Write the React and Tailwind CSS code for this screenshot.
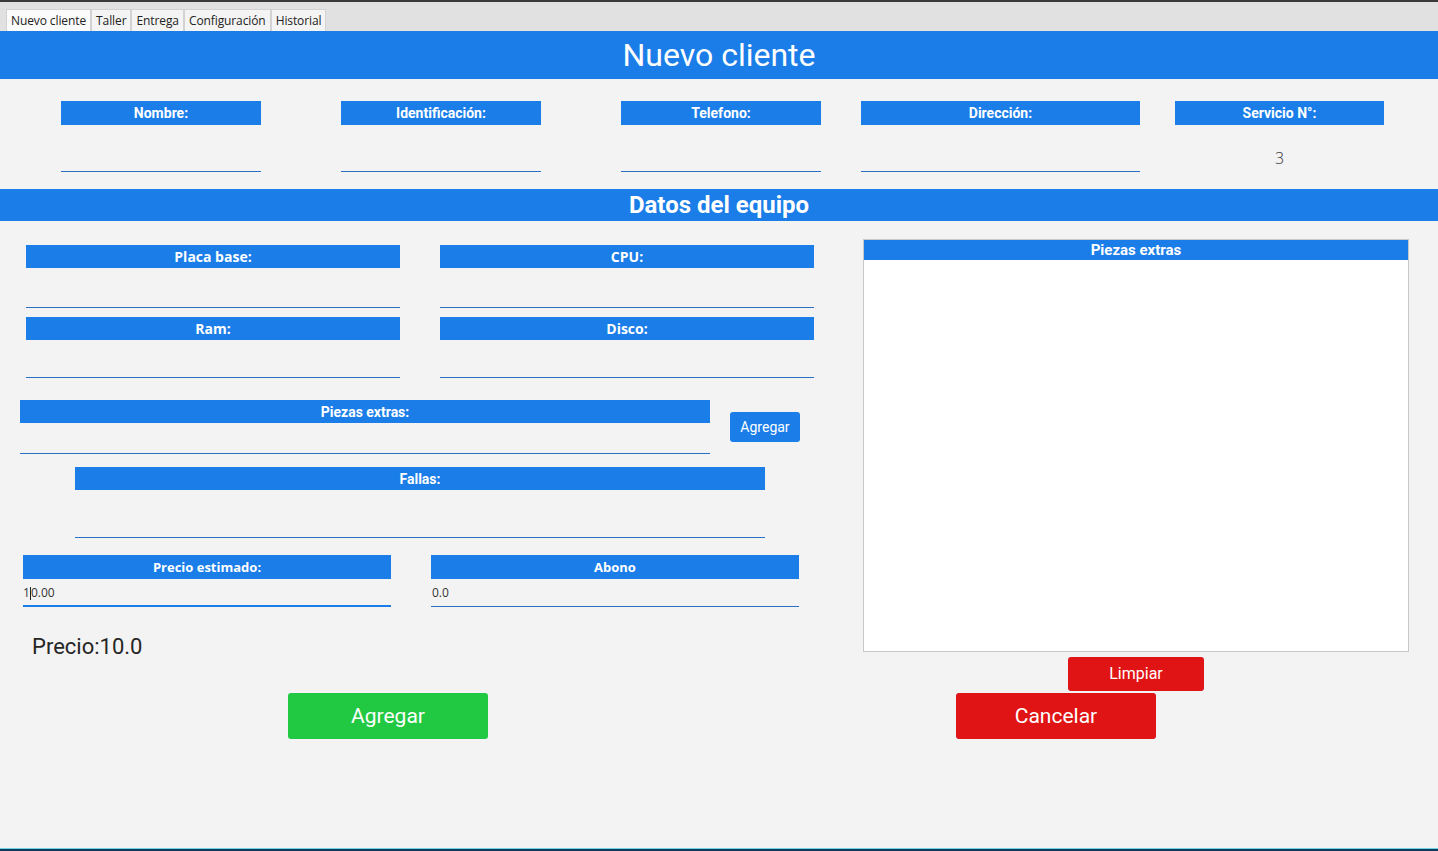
import React from "react";

const BLUE = "bg-[#1a7de8]";

function TopField({ label, ml, w, value }) {
  return (
    <div className={`flex flex-col shrink-0 ${ml} ${w}`}>
      <div className={`h-[24px] ${BLUE} text-white text-[14px] font-bold flex items-center justify-center`}>{label}</div>
      {value ? (
        <div className="h-[47px] flex items-center justify-center pt-[18px] text-[16px] font-light text-[#333] font-['Open_Sans',sans-serif]">{value}</div>
      ) : (
        <div className="h-[47px] border-b border-[#2a6fc0]"></div>
      )}
    </div>
  );
}

function Field({ label, ml, w, boxH, labelCls = "", lh = "h-[23px]" }) {
  return (
    <div className={`flex flex-col shrink-0 ${ml} ${w}`}>
      <div className={`${lh} ${BLUE} text-white text-[14px] font-bold flex items-center justify-center ${labelCls}`}>{label}</div>
      <div className={`${boxH} border-b border-[#2a6fc0]`}></div>
    </div>
  );
}

export default function App() {
  const tabs = ["Nuevo cliente", "Taller", "Entrega", "Configuración", "Historial"];
  return (
    <div className="w-[1438px] h-[851px] bg-[#f3f3f3] flex flex-col overflow-hidden font-['Roboto',sans-serif]">
      <div className="h-[2px] bg-[#3a3a3a]"></div>
      <div className="h-[29px] bg-[#e1e1e1] flex items-end pl-[6px]">
        {tabs.map((t, i) => (
          <div
            key={t}
            className={`h-[22px] px-[4px] flex items-center text-[12px] tracking-[-0.1px] text-[#222] font-['Open_Sans',sans-serif] border border-b-0 border-[#d2d2d2] ${i === 0 ? "bg-[#fbfbfb]" : "bg-[#f4f4f4]"}`}
          >
            {t}
          </div>
        ))}
      </div>
      <div className={`h-[48px] ${BLUE} flex items-center justify-center text-white text-[32px]`}>Nuevo cliente</div>

      <div className="flex pt-[22px]">
        <TopField label="Nombre:" ml="ml-[61px]" w="w-[200px]" />
        <TopField label="Identificación:" ml="ml-[80px]" w="w-[200px]" />
        <TopField label="Telefono:" ml="ml-[80px]" w="w-[200px]" />
        <TopField label="Dirección:" ml="ml-[40px]" w="w-[279px]" />
        <TopField label="Servicio N°:" ml="ml-[35px]" w="w-[209px]" value="3" />
      </div>

      <div className={`mt-[17px] h-[32px] ${BLUE} flex items-center justify-center text-white text-[24px] font-bold`}>Datos del equipo</div>

      <div className="flex items-start">
        <div className="w-[840px] shrink-0 flex flex-col">
          <div className="flex pt-[24px]">
            <Field label="Placa base:" ml="ml-[26px]" w="w-[374px]" boxH="h-[40px]" labelCls="font-['Open_Sans',sans-serif] text-[13px]" />
            <Field label="CPU:" ml="ml-[40px]" w="w-[374px]" boxH="h-[40px]" labelCls="font-['Open_Sans',sans-serif] text-[13px]" />
          </div>
          <div className="flex mt-[9px]">
            <Field label="Ram:" ml="ml-[26px]" w="w-[374px]" boxH="h-[38px]" labelCls="font-['Open_Sans',sans-serif] text-[13px]" />
            <Field label="Disco:" ml="ml-[40px]" w="w-[374px]" boxH="h-[38px]" labelCls="font-['Open_Sans',sans-serif] text-[13px]" />
          </div>
          <div className="flex items-start mt-[22px]">
            <Field label="Piezas extras:" ml="ml-[20px]" w="w-[690px]" boxH="h-[31px]" labelCls="pt-[2px]" />
            <button className={`ml-[20px] mt-[12px] w-[70px] h-[30px] ${BLUE} rounded-[3px] text-white text-[14px]`}>Agregar</button>
          </div>
          <div className="flex mt-[13px]">
            <Field label="Fallas:" ml="ml-[75px]" w="w-[690px]" boxH="h-[48px]" labelCls="pt-[2px]" />
          </div>
          <div className="flex mt-[17px]">
            <div className="flex flex-col ml-[23px] w-[368px]">
              <div className={`h-[24px] ${BLUE} text-white text-[13px] font-bold font-['Open_Sans',sans-serif] flex items-center justify-center pt-[1px]`}>Precio estimado:</div>
              <div className="h-[28px] border-b-2 border-[#1a7de8] flex items-center pt-[2px] text-[12px] text-[#333] font-['Open_Sans',sans-serif]">
                <span>1</span>
                <span className="w-px h-[13px] bg-[#222]"></span>
                <span>0.00</span>
              </div>
            </div>
            <div className="flex flex-col ml-[40px] w-[368px]">
              <div className={`h-[24px] ${BLUE} text-white text-[13px] font-bold font-['Open_Sans',sans-serif] flex items-center justify-center pt-[1px]`}>Abono</div>
              <div className="h-[28px] border-b border-[#2a6fc0] flex items-center pt-[1px] pl-[1px] text-[12px] text-[#333] font-['Open_Sans',sans-serif]">0.0</div>
            </div>
          </div>
          <div className="mt-[27px] ml-[32px] text-[22px] leading-[26px] text-[#262626]">Precio:10.0</div>
        </div>

        <div className="flex flex-col">
          <div className="ml-[23px] mt-[18px] w-[546px] h-[413px] border border-[#c8c8c8] bg-white flex flex-col">
            <div className={`h-[20px] ${BLUE} text-white text-[15px] font-bold flex items-center justify-center`}>Piezas extras</div>
          </div>
          <button className="ml-[228px] mt-[5px] w-[136px] h-[34px] bg-[#e01414] rounded-[3px] text-white text-[16px]">Limpiar</button>
        </div>
      </div>

      <div className="flex mt-[2px]">
        <button className="ml-[288px] w-[200px] h-[46px] bg-[#21c942] rounded-[3px] text-white text-[21px] pt-[1px]">Agregar</button>
        <button className="ml-[468px] w-[200px] h-[46px] bg-[#e01414] rounded-[3px] text-white text-[21px] pt-[1px]">Cancelar</button>
      </div>

      <div className="flex-1"></div>
      <div className="h-[1px] bg-[#6fd3e6]"></div>
      <div className="h-[2px] bg-[#0c3d5a]"></div>
    </div>
  );
}
